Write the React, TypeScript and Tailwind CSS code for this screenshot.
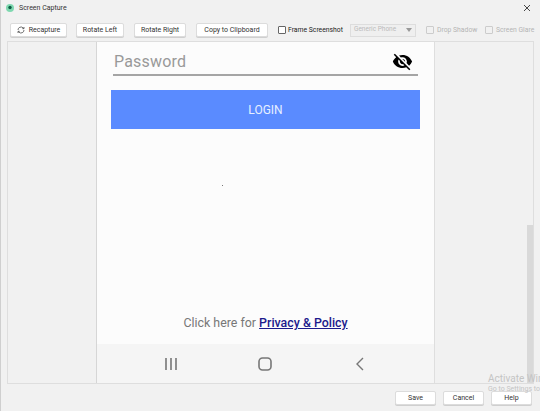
const toolbarButton =
  'h-[14px] shrink-0 flex items-center justify-center gap-1 bg-white border border-[#dcdcdc] rounded-[2px] text-[7px] text-[#333] whitespace-nowrap shadow-[0_1px_0_#cfcfcf]';

function NavBar() {
  return (
    <div className="h-[39px] shrink-0 bg-[#f5f5f5] grid grid-cols-3 px-[27px] items-center">
      <div className="flex justify-center">
        <svg width="14" height="14" viewBox="0 0 14 14" fill="none" stroke="#777" strokeWidth="1.6">
          <path d="M2 1v12M7 1v12M12 1v12" />
        </svg>
      </div>
      <div className="flex justify-center">
        <svg width="14" height="14" viewBox="0 0 14 14" fill="none" stroke="#777" strokeWidth="1.6">
          <rect x="1" y="1" width="12" height="12" rx="3.5" />
        </svg>
      </div>
      <div className="flex justify-center">
        <svg width="10" height="14" viewBox="0 0 10 14" fill="none" stroke="#777" strokeWidth="1.4">
          <path d="M8 1L2 7l6 6" />
        </svg>
      </div>
    </div>
  );
}

function EyeOffFilled() {
  return (
    <svg width="21" height="21" viewBox="0 0 24 24" fill="#000">
      <path d="M12 7c2.76 0 5 2.24 5 5 0 .65-.13 1.26-.36 1.83l2.92 2.92c1.51-1.26 2.7-2.89 3.43-4.75-1.73-4.39-6-7.5-11-7.5-1.4 0-2.74.25-3.98.7l2.16 2.16C10.74 7.13 11.35 7 12 7zM2 4.27l2.28 2.28.46.46C3.08 8.3 1.78 10.02 1 12c1.73 4.39 6 7.5 11 7.5 1.55 0 3.03-.3 4.38-.84l.42.42L19.73 22 21 20.73 3.27 3 2 4.27zM7.53 9.8l1.55 1.55c-.05.21-.08.43-.08.65 0 1.66 1.34 3 3 3 .22 0 .44-.03.65-.08l1.55 1.55c-.67.33-1.41.53-2.2.53-2.76 0-5-2.24-5-5 0-.79.2-1.53.53-2.2zm4.31-.78l3.15 3.15.02-.16c0-1.66-1.34-3-3-3l-.17.01z" />
    </svg>
  );
}

export default function App() {
  return (
    <div className="w-[540px] h-[411px] relative overflow-hidden flex flex-col bg-[#f1f1f1] font-['Roboto','Noto_Sans',sans-serif] border-l border-[#cfcfcf]">
      <div className="h-[23px] shrink-0 flex items-center justify-between pl-[5px] pr-[9px] pb-[7px]">
        <div className="flex items-center gap-[5px] text-[7px] text-[#333]">
          <svg width="8" height="8" viewBox="0 0 8 8">
            <circle cx="4" cy="4" r="4" fill="#7fd8b0" />
            <circle cx="4" cy="3.5" r="1.7" fill="#0d5c43" />
          </svg>
          <span>Screen Capture</span>
        </div>
        <svg width="8" height="8" viewBox="0 0 8 8" stroke="#333" strokeWidth="0.9">
          <path d="M1 1l6 6M7 1L1 7" />
        </svg>
      </div>

      <div className="h-[14px] shrink-0 flex items-center pl-[9px]">
        <button className={`${toolbarButton} w-[57px]`}>
          <svg width="8" height="8" viewBox="0 0 24 24" fill="none" stroke="#555" strokeWidth="2.5">
            <path d="M21 12a9 9 0 0 1-15.5 6.2L3 16M3 12a9 9 0 0 1 15.5-6.2L21 8M21 3v5h-5M3 21v-5h5" />
          </svg>
          Recapture
        </button>
        <button className={`${toolbarButton} w-[48px] ml-[9px]`}>Rotate Left</button>
        <button className={`${toolbarButton} w-[52px] ml-[10px]`}>Rotate Right</button>
        <button className={`${toolbarButton} w-[72px] ml-[10px]`}>Copy to Clipboard</button>
        <span className="w-[8px] h-[8px] shrink-0 ml-[10px] bg-white border border-[#666] rounded-[1px]" />
        <span className="w-[57px] shrink-0 ml-[2px] text-[6.8px] text-[#222] whitespace-nowrap">Frame Screenshot</span>
        <div className="w-[66px] h-[13px] shrink-0 ml-[5px] flex items-center justify-between px-[3px] border border-[#ddd] bg-[#efefef] text-[6.5px] text-[#bbb] whitespace-nowrap">
          <span>Generic Phone</span>
          <svg width="6" height="4" viewBox="0 0 6 4" fill="#999">
            <path d="M0 0h6L3 4z" />
          </svg>
        </div>
        <span className="w-[8px] h-[8px] shrink-0 ml-[10px] border border-[#ccc] rounded-[1px]" />
        <span className="w-[44px] shrink-0 ml-[3px] text-[6.8px] text-[#b5b5b5] whitespace-nowrap">Drop Shadow</span>
        <span className="w-[8px] h-[8px] shrink-0 ml-[4px] border border-[#ccc] rounded-[1px]" />
        <span className="shrink-0 ml-[3px] text-[6.8px] text-[#b5b5b5] whitespace-nowrap">Screen Glare</span>
      </div>

      <div className="h-[343px] shrink-0 mt-[4px] ml-[6px] mr-[6px] border border-[#dedede] flex bg-[#f1f1f1] relative">
        <div className="w-[89px] shrink-0 border-r border-[#d6d6d6]" />
        <div className="w-[338px] shrink-0 flex flex-col bg-[#fcfcfc] border-r border-[#dedede] relative">
          <div className="flex-1 flex flex-col">
            <div className="mx-[16px] h-[34px] shrink-0 flex items-center justify-between border-b-2 border-[#a5a5a5] pl-px pr-[5px] pt-[7px]">
              <span className="text-[16px] tracking-[0.2px] text-[#999]">Password</span>
              <EyeOffFilled />
            </div>
            <button className="shrink-0 mx-[14px] mt-[14px] h-[39px] bg-[#5a8bff] text-[12px] text-[#e6f0ff]">LOGIN</button>
            <div className="flex-1 flex items-end justify-center pb-[11px] text-[12.4px] text-[#777]">
              <span>
                Click here for{' '}
                <a className="font-medium text-[#1c1a8c] underline">Privacy &amp; Policy</a>
              </span>
            </div>
          </div>
          <NavBar />
          <span className="absolute left-[125px] top-[143px] w-px h-px bg-[#777]" />
        </div>
        <div className="flex-1 relative">
          <div className="absolute right-0 bottom-0 w-[6px] h-[158px] bg-[#d9d9d9]" />
        </div>
      </div>

      <div className="flex-1 flex items-start justify-end gap-[7px] pt-[7px] pr-[8px]">
        {['Save', 'Cancel', 'Help'].map((label) => (
          <button key={label} className={`${toolbarButton} w-[41px]`}>
            {label}
          </button>
        ))}
      </div>

      <div className="absolute left-[487px] top-[372px] text-[#c4c4c4] whitespace-nowrap pointer-events-none">
        <div className="text-[10px] leading-[13px]">Activate Windows</div>
        <div className="text-[7px] leading-[9px]">Go to Settings to activate</div>
      </div>
    </div>
  );
}
